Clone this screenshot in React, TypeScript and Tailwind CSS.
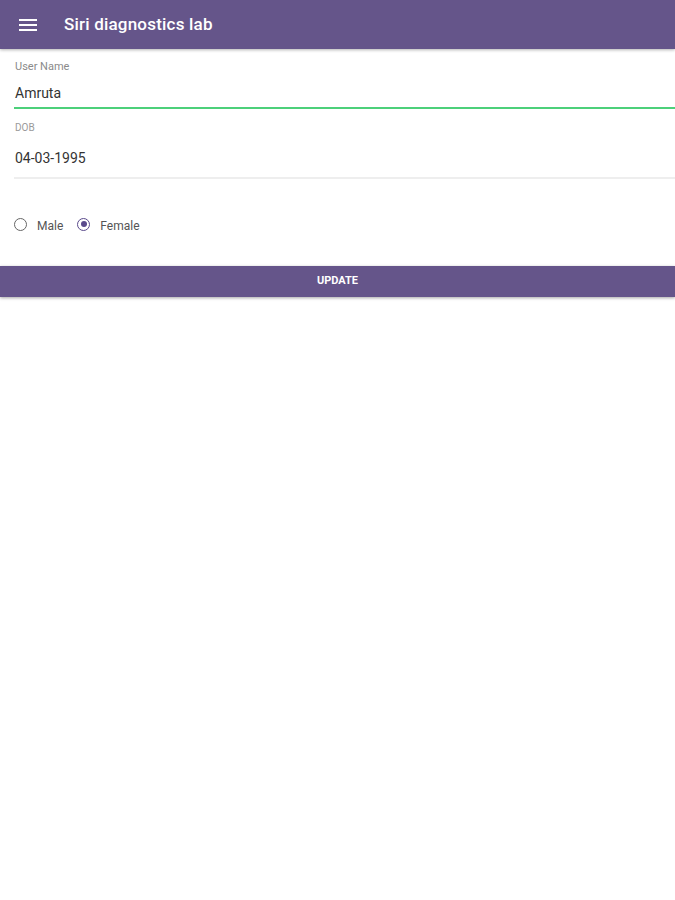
import React from "react";

export default function App() {
  return (
    <div className="min-h-[900px] w-[675px] bg-white" style={{ fontFamily: "Roboto, 'Noto Sans', sans-serif" }}>
      <div className="h-[49px] bg-[#65558a] flex items-center shadow-[0_1px_3px_rgba(0,0,0,0.3)]">
        <div className="w-[64px] pl-[19px] flex">
          <svg width="18" height="12" viewBox="0 0 18 12">
            <rect x="0" y="0" width="18" height="2" fill="#fff" />
            <rect x="0" y="5" width="18" height="2" fill="#fff" />
            <rect x="0" y="10" width="18" height="2" fill="#fff" />
          </svg>
        </div>
        <div className="text-white text-[17px] font-medium tracking-[0.2px]">Siri diagnostics lab</div>
      </div>
      <div className="pl-[14px] pt-[12px]">
        <div className="text-[11px] leading-[12px] text-[#8a8a8a] pl-[1px]">User Name</div>
        <div className="mt-[12px] text-[14px] leading-[16px] text-[#333] pl-[1px]">Amruta</div>
        <div className="mt-[6px] h-[2px] bg-[#4cd07a]" />
        <div className="mt-[13px] text-[10px] leading-[12px] text-[#9a9a9a] pl-[1px]">DOB</div>
        <div className="mt-[16px] text-[14px] leading-[16px] text-[#333] pl-[1px]">04-03-1995</div>
        <div className="mt-[11px] h-[2px] bg-[#eeeeee]" />
      </div>
      <div className="pl-[14px] mt-[34px] flex items-center text-[12px] text-[#555]">
        <span className="w-[13px] h-[13px] rounded-full border-[1.5px] border-[#666] inline-block" />
        <span className="ml-[10px] mt-[4px]">Male</span>
        <span className="ml-[14px] w-[13px] h-[13px] rounded-full border-[1.5px] border-[#5a4a8c] inline-flex items-center justify-center">
          <span className="w-[6px] h-[6px] rounded-full bg-[#5a4a8c]" />
        </span>
        <span className="ml-[10px] mt-[4px]">Female</span>
      </div>
      <div className="mt-[31px] h-[31px] bg-[#65558a] flex items-center justify-center text-white text-[11px] font-bold shadow-[0_1px_3px_rgba(0,0,0,0.35)]">
        UPDATE
      </div>
    </div>
  );
}
